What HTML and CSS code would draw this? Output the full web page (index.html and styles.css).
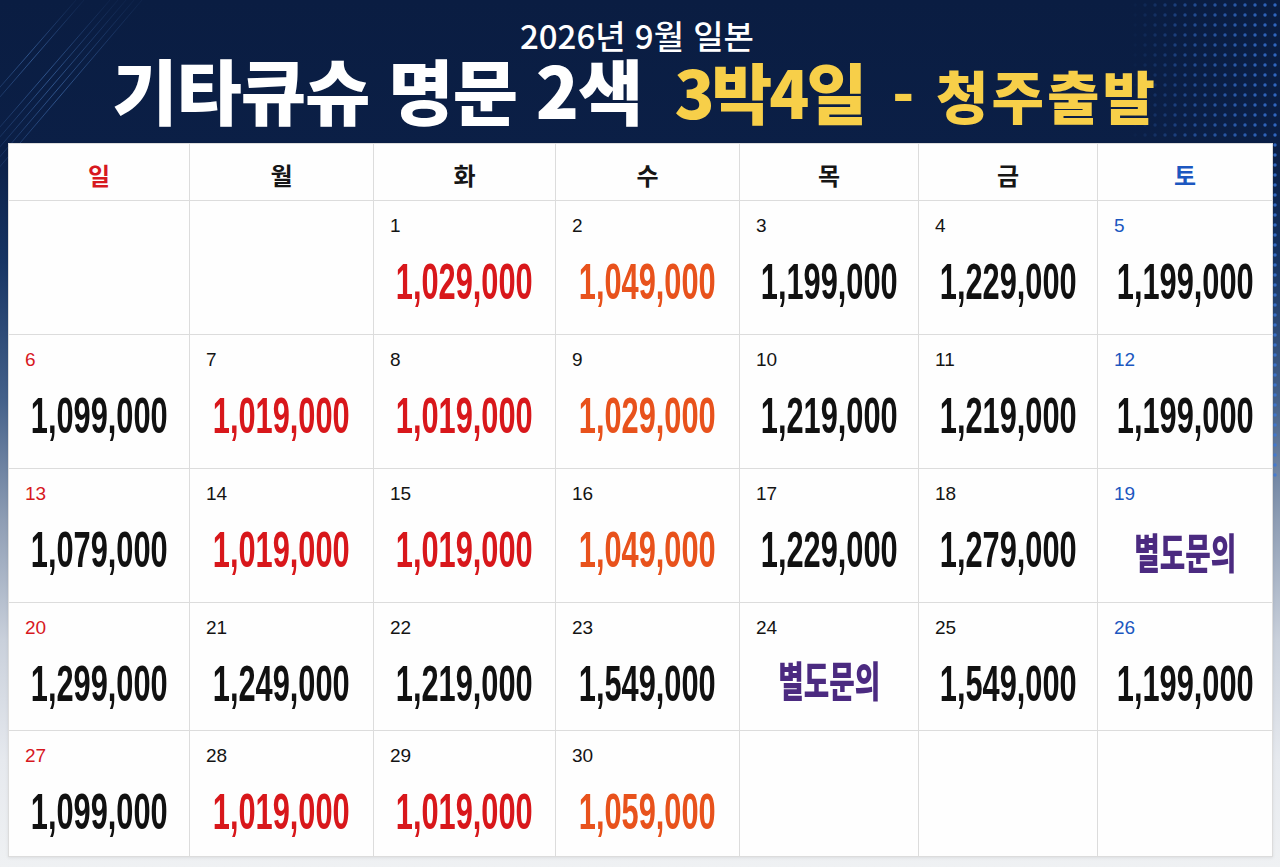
FILE: index.html
```html
<!DOCTYPE html>
<html lang="ko">
<head>
<meta charset="utf-8">
<title>2026년 9월 일본 기타큐슈 명문 2색 3박4일 - 청주출발</title>
<link rel="stylesheet" href="styles.css">
</head>
<body>
<div class="page">
  <svg class="deco" width="1280" height="480" viewBox="0 0 1280 480" aria-hidden="true">
    <defs>
      <pattern id="dots" x="0" y="0" width="10" height="10" patternUnits="userSpaceOnUse">
        <circle cx="5" cy="5" r="1.7" fill="#3a7ae0"/>
      </pattern>
      <linearGradient id="fadeL" x1="1" y1="0" x2="0" y2="0">
        <stop offset="0" stop-color="#fff" stop-opacity="1"/>
        <stop offset="0.6" stop-color="#fff" stop-opacity="0.6"/>
        <stop offset="1" stop-color="#fff" stop-opacity="0"/>
      </linearGradient>
      <mask id="dotMask">
        <rect x="1130" y="0" width="150" height="480" fill="url(#fadeL)"/>
      </mask>
      <linearGradient id="lineFade" x1="0" y1="1" x2="1" y2="0">
        <stop offset="0" stop-color="#4d86d6" stop-opacity="0.05"/>
        <stop offset="0.5" stop-color="#5a93e0" stop-opacity="0.45"/>
        <stop offset="1" stop-color="#4d86d6" stop-opacity="0.05"/>
      </linearGradient>
    </defs>
    <rect x="1130" y="0" width="150" height="480" fill="url(#dots)" mask="url(#dotMask)" opacity="0.8"/>
    <g stroke="url(#lineFade)" stroke-width="1" fill="none">
      <line x1="-20" y1="150" x2="110" y2="0"/>
      <line x1="-20" y1="160" x2="118" y2="0"/>
      <line x1="-20" y1="170" x2="126" y2="0"/>
      <line x1="-20" y1="180" x2="134" y2="0"/>
      <line x1="-20" y1="190" x2="142" y2="0"/>
      <line x1="-20" y1="120" x2="84" y2="0"/>
      <line x1="-20" y1="110" x2="76" y2="0"/>
    </g>
  </svg>

  <header class="head">
    <p class="sub">2026년 9월 일본</p>
    <h1 class="title"><span class="t-white">기타큐슈 명문 2색</span><span class="t-yellow t-big">3박4일</span><span class="t-yellow t-small">- 청주출발</span></h1>
  </header>

  <main class="cal">
    <div class="wd sun">일</div>
    <div class="wd">월</div>
    <div class="wd">화</div>
    <div class="wd">수</div>
    <div class="wd">목</div>
    <div class="wd">금</div>
    <div class="wd sat">토</div>

    <div class="cell"></div>
    <div class="cell"></div>
    <div class="cell"><span class="day">1</span><span class="price red"><b>1,029,000</b></span></div>
    <div class="cell"><span class="day">2</span><span class="price orange"><b>1,049,000</b></span></div>
    <div class="cell"><span class="day">3</span><span class="price"><b>1,199,000</b></span></div>
    <div class="cell"><span class="day">4</span><span class="price"><b>1,229,000</b></span></div>
    <div class="cell"><span class="day sat">5</span><span class="price"><b>1,199,000</b></span></div>

    <div class="cell"><span class="day sun">6</span><span class="price"><b>1,099,000</b></span></div>
    <div class="cell"><span class="day">7</span><span class="price red"><b>1,019,000</b></span></div>
    <div class="cell"><span class="day">8</span><span class="price red"><b>1,019,000</b></span></div>
    <div class="cell"><span class="day">9</span><span class="price orange"><b>1,029,000</b></span></div>
    <div class="cell"><span class="day">10</span><span class="price"><b>1,219,000</b></span></div>
    <div class="cell"><span class="day">11</span><span class="price"><b>1,219,000</b></span></div>
    <div class="cell"><span class="day sat">12</span><span class="price"><b>1,199,000</b></span></div>

    <div class="cell"><span class="day sun">13</span><span class="price"><b>1,079,000</b></span></div>
    <div class="cell"><span class="day">14</span><span class="price red"><b>1,019,000</b></span></div>
    <div class="cell"><span class="day">15</span><span class="price red"><b>1,019,000</b></span></div>
    <div class="cell"><span class="day">16</span><span class="price orange"><b>1,049,000</b></span></div>
    <div class="cell"><span class="day">17</span><span class="price"><b>1,229,000</b></span></div>
    <div class="cell"><span class="day">18</span><span class="price"><b>1,279,000</b></span></div>
    <div class="cell"><span class="day sat">19</span><span class="ask"><b>별도문의</b></span></div>

    <div class="cell short"><span class="day sun">20</span><span class="price"><b>1,299,000</b></span></div>
    <div class="cell short"><span class="day">21</span><span class="price"><b>1,249,000</b></span></div>
    <div class="cell short"><span class="day">22</span><span class="price"><b>1,219,000</b></span></div>
    <div class="cell short"><span class="day">23</span><span class="price"><b>1,549,000</b></span></div>
    <div class="cell short"><span class="day">24</span><span class="ask ask-up"><b>별도문의</b></span></div>
    <div class="cell short"><span class="day">25</span><span class="price"><b>1,549,000</b></span></div>
    <div class="cell short"><span class="day sat">26</span><span class="price"><b>1,199,000</b></span></div>

    <div class="cell short"><span class="day sun">27</span><span class="price"><b>1,099,000</b></span></div>
    <div class="cell short"><span class="day">28</span><span class="price red"><b>1,019,000</b></span></div>
    <div class="cell short"><span class="day">29</span><span class="price red"><b>1,019,000</b></span></div>
    <div class="cell short"><span class="day">30</span><span class="price orange"><b>1,059,000</b></span></div>
    <div class="cell short"></div>
    <div class="cell short"></div>
    <div class="cell short"></div>
  </main>
</div>
</body>
</html>
```

FILE: styles.css
```css
* { box-sizing: border-box; }

html, body {
  margin: 0;
  padding: 0;
}

body {
  width: 1280px;
  height: 867px;
  overflow: hidden;
  font-family: "Noto Sans CJK KR", "Noto Sans", sans-serif;
  background: linear-gradient(to bottom,
    #0a1d42 0px,
    #0b1f46 150px,
    #163463 260px,
    #45618a 400px,
    #8e9db4 520px,
    #c9d0db 640px,
    #e6e9ee 760px,
    #eff1f3 867px);
}

.page {
  position: relative;
  width: 1280px;
  height: 867px;
}

.deco {
  position: absolute;
  left: 0;
  top: 0;
  pointer-events: none;
}

.head {
  position: relative;
  height: 143px;
  display: flex;
  flex-direction: column;
  align-items: center;
  padding-top: 18px;
  padding-right: 10px;
}

.sub {
  margin: 0;
  color: #ffffff;
  font-size: 33px;
  line-height: 34px;
  font-weight: 500;
  letter-spacing: 0px;
  padding-left: 4px;
}

.title {
  margin: 0;
  display: flex;
  align-items: baseline;
  gap: 32px;
  font-size: 71px;
  line-height: 72px;
  font-weight: 900;
  letter-spacing: -1px;
}

.t-white { color: #ffffff; }
.t-yellow { color: #f7cf49; }
.t-big {
  font-size: 66px;
  letter-spacing: -3px;
}
.t-small {
  font-size: 57px;
  letter-spacing: 3px;
  margin-left: -4px;
}

.cal {
  position: relative;
  margin: 0 7px 0 8px;
  display: grid;
  grid-template-columns: 181px 184px 182px 184px 179px 179px 1fr;
  grid-template-rows: 57px 134px 134px 134px 128px 126px;
  background: #ffffff;
  border-left: 1px solid #dcdcdc;
  border-top: 1px solid #dcdcdc;
  box-shadow: 0 1px 3px rgba(0, 0, 0, 0.08);
}

.wd, .cell {
  border-right: 1px solid #dcdcdc;
  border-bottom: 1px solid #dcdcdc;
  background: #fefefe;
}

.wd {
  display: flex;
  align-items: center;
  justify-content: center;
  font-size: 24px;
  font-weight: 700;
  color: #161616;
  padding-top: 4px;
}

.wd.sun { color: #d7181e; }
.wd.sat { color: #1c57c0; }

.cell {
  display: flex;
  flex-direction: column;
  padding: 14px 0 0 16px;
  overflow: hidden;
}

.day {
  font-family: "Liberation Sans", Arial, sans-serif;
  font-size: 19px;
  line-height: 22px;
  color: #141414;
  height: 22px;
}

.day.sun { color: #d7181e; }
.day.sat { color: #1c57c0; }

.price {
  display: flex;
  justify-content: center;
  margin-top: 20px;
  margin-left: -16px;
  color: #111111;
}

.price b {
  display: inline-block;
  font-family: "Liberation Sans", Arial, sans-serif;
  font-size: 50px;
  line-height: 50px;
  font-weight: 700;
  white-space: nowrap;
  transform: scaleX(0.615);
  letter-spacing: 0;
}

.price.red { color: #d8171b; }
.price.orange { color: #e8521c; }

.ask {
  display: flex;
  justify-content: center;
  margin-top: 20px;
  margin-left: -16px;
  color: #4b2a80;
}

.ask.ask-up { margin-top: 14px; }

.ask b {
  display: inline-block;
  font-family: "Noto Sans CJK KR", sans-serif;
  font-size: 42px;
  line-height: 52px;
  font-weight: 900;
  white-space: nowrap;
  transform: scaleX(0.66);
}
```
